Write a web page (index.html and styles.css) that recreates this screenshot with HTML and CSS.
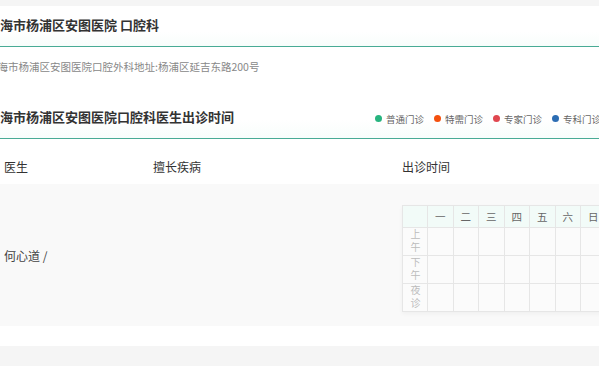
FILE: index.html
```html
<!DOCTYPE html>
<html lang="zh-CN">
<head>
  <meta charset="UTF-8" />
  <title>上海市杨浦区安图医院 口腔科</title>
  <link rel="stylesheet" href="styles.css">
</head>
<body>
  <div class="band"></div>

  <div class="page">
    <div class="hd">
      <h1>上海市杨浦区安图医院 口腔科</h1>
    </div>
    <p class="addr">上海市杨浦区安图医院口腔外科地址:杨浦区延吉东路200号</p>

    <div class="hd hd-sched">
      <h2>上海市杨浦区安图医院口腔科医生出诊时间</h2>
      <ul class="legend">
        <li><i class="dot green"></i>普通门诊</li>
        <li><i class="dot orange"></i>特需门诊</li>
        <li><i class="dot red"></i>专家门诊</li>
        <li><i class="dot blue"></i>专科门诊</li>
      </ul>
    </div>

    <div class="row row-head">
      <div class="c-doc">医生</div>
      <div class="c-skill">擅长疾病</div>
      <div class="c-time">出诊时间</div>
    </div>

    <div class="row row-doc">
      <div class="c-doc">何心道 /</div>
      <div class="c-skill"></div>
      <div class="c-time">
        <table class="sched">
          <tr class="days">
            <th class="lbl"></th>
            <th>一</th><th>二</th><th>三</th><th>四</th><th>五</th><th>六</th><th>日</th>
          </tr>
          <tr>
            <td class="lbl"><span>上午</span></td>
            <td></td><td></td><td></td><td></td><td></td><td></td><td></td>
          </tr>
          <tr>
            <td class="lbl"><span>下午</span></td>
            <td></td><td></td><td></td><td></td><td></td><td></td><td></td>
          </tr>
          <tr>
            <td class="lbl"><span>夜诊</span></td>
            <td></td><td></td><td></td><td></td><td></td><td></td><td></td>
          </tr>
        </table>
      </div>
    </div>
  </div>

  <div class="band band-bottom"></div>
</body>
</html>
```

FILE: styles.css
```css
html, body { margin: 0; padding: 0; }
body {
  background: #fff;
  overflow: hidden;
  font-family: "Noto Sans CJK SC", "Microsoft YaHei", "DejaVu Sans", sans-serif;
  color: #333;
}

.band { height: 6px; background: #f5f5f5; }
.band-bottom { height: 20px; margin-top: 20px; background: #f5f5f5; }

.page { width: 640px; margin-left: -13px; }

.hd {
  display: flex;
  align-items: center;
  height: 38px;
  padding-bottom: 2px;
  border-bottom: 1px solid #48ab95;
  background: linear-gradient(to bottom, #fff 65%, #f7fdfb 100%);
}
.hd h1, .hd h2 { margin: 0; font-size: 13px; font-weight: bold; color: #333; line-height: 16px; }
.hd-sched { height: 40px; padding-top: 10px; padding-bottom: 1px; justify-content: space-between; }

.addr {
  margin: 0;
  height: 40px;
  line-height: 40px;
  font-size: 10.5px;
  color: #888;
  white-space: nowrap;
}

.legend {
  display: flex;
  margin: 3px 0 0;
  padding: 0 26px 0 0;
  list-style: none;
  font-size: 9.5px;
  color: #666;
}
.legend li { display: flex; align-items: center; margin-left: 10px; white-space: nowrap; }
.dot { display: inline-block; width: 7px; height: 7px; border-radius: 50%; margin-right: 4px; }
.green { background: #27b47f; }
.orange { background: #f4500e; }
.red { background: #e0474f; }
.blue { background: #2c6db3; }

.row { display: grid; grid-template-columns: 166px 249px 1fr; align-items: center; font-size: 12px; }
.row-head { height: 36px; padding-top: 9px; }
.c-doc { padding-left: 17px; }
.row-doc { background: #f9f9f9; height: 142px; color: #444; }
.row-doc .c-time { align-self: start; padding-top: 21px; }

.sched {
  border-collapse: collapse;
  table-layout: fixed;
  width: 203.5px;
  background: #fbfbfb;
  box-shadow: 0 2px 4px rgba(0, 0, 0, 0.04);
}
.sched th, .sched td {
  border: 1px solid #e6e6e6;
  width: 24.5px;
  padding: 0;
  text-align: center;
}
.sched .lbl { width: 24px; font-size: 10px; color: #bbb; }
.lbl span { display: inline-block; writing-mode: vertical-rl; letter-spacing: 3px; line-height: 12px; vertical-align: middle; }
.days th { height: 21px; background: #f2fbf8; font-size: 10.5px; font-weight: normal; color: #666; }
.sched td { height: 27px; }
```
